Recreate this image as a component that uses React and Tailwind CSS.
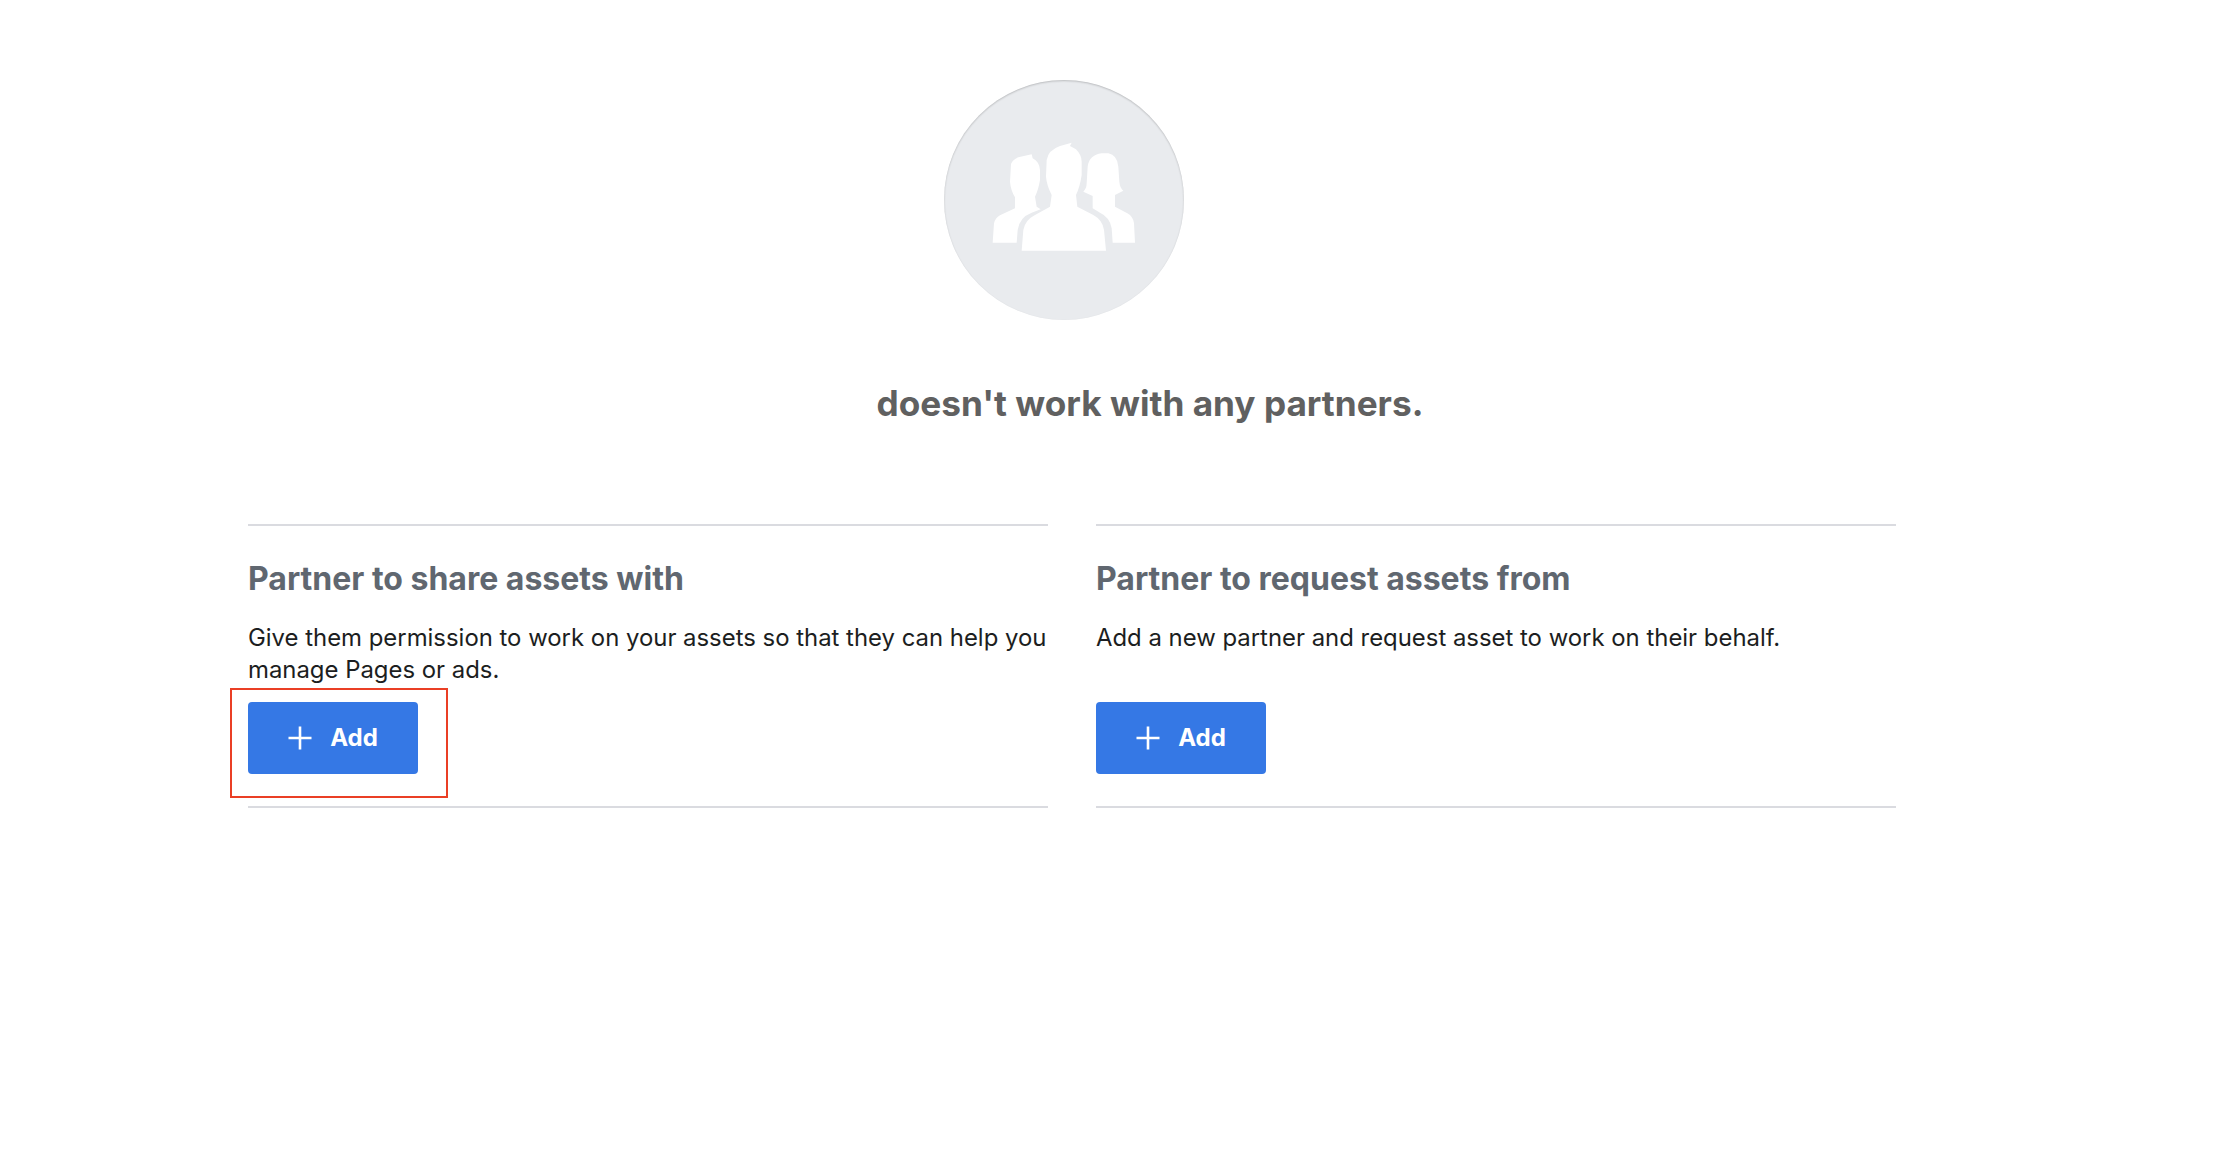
const columns = [
  {
    title: 'Partner to share assets with',
    text: 'Give them permission to work on your assets so that they can help you manage Pages or ads.',
    highlighted: true,
  },
  {
    title: 'Partner to request assets from',
    text: 'Add a new partner and request asset to work on their behalf.',
  },
]

function PeopleIcon() {
  return (
    <svg viewBox="72 60 720 720" className="h-60 w-60">
      <path
        fill="#fff"
        d="M218 548 L222 490 Q226 474 240 466 L285 445 L285 412 Q272 390 270 365 L273 312 Q278 298 295 292 L335 283 L338 295 Q358 305 360 330 L360 360 Q355 390 345 410 L350 440 L362 448 L335 458 Q298 472 293 510 L290 548 Z"
      />
      <path
        fill="#fff"
        d="M578 548 L575 505 Q570 472 540 458 L518 445 L518 408 L490 395 Q500 385 500 370 L503 320 Q507 285 545 280 L565 280 Q592 285 595 320 L598 365 Q600 385 610 392 L585 405 L585 440 L622 460 Q640 470 642 490 L645 548 Z"
      />
      <path
        fill="#fff"
        d="M305 572 L310 510 Q315 480 345 465 L390 440 L395 405 Q380 375 378 350 L380 300 Q385 270 420 258 L455 248 L450 258 L468 268 Q485 285 485 305 L485 345 Q480 380 468 405 L472 440 L520 465 Q548 480 552 510 L558 572 Z"
      />
    </svg>
  )
}

function AddButton() {
  return (
    <button className="flex h-[72px] w-[170px] items-center justify-center gap-[18px] rounded-[4px] bg-[#3578e5] text-[24px] font-bold text-white">
      <svg viewBox="0 0 24 24" className="h-6 w-6" fill="none" stroke="#fff" strokeWidth="2.6">
        <path d="M12 0.5 V23.5 M0.5 12 H23.5" />
      </svg>
      Add
    </button>
  )
}

export default function App() {
  return (
    <div className="min-h-[1176px] bg-white pt-20 font-['Inter',sans-serif]">
      {/* Empty state */}
      <div className="ml-[944px] flex h-60 w-60 items-center justify-center rounded-full bg-[#e9ebee] shadow-[inset_0_1px_2px_rgba(0,0,0,0.2)]">
        <PeopleIcon />
      </div>
      <h1 className="ml-[248px] mt-[61px] w-[1804px] text-center text-[35.2px] leading-[44px] font-bold text-[#606060]">
        doesn't work with any partners.
      </h1>

      {/* Partner columns */}
      <div className="ml-[248px] mt-[99px] grid w-[1648px] grid-cols-2 gap-12">
        {columns.map(col => (
          <div key={col.title} className="relative h-[284px] border-y-2 border-[#dadbe0] pt-[33px]">
            <h2 className="text-[32px] leading-[40px] font-bold text-[#606770]">{col.title}</h2>
            <p className="mt-[23px] h-16 text-[23.9px] leading-[32px] text-[#1c1e21]">{col.text}</p>
            <div className="mt-[16px]">
              <AddButton />
            </div>
            {col.highlighted && (
              <div className="absolute left-[-18px] top-[162px] h-[110px] w-[218px] border-2 border-[#ea3f25]" />
            )}
          </div>
        ))}
      </div>
    </div>
  )
}
